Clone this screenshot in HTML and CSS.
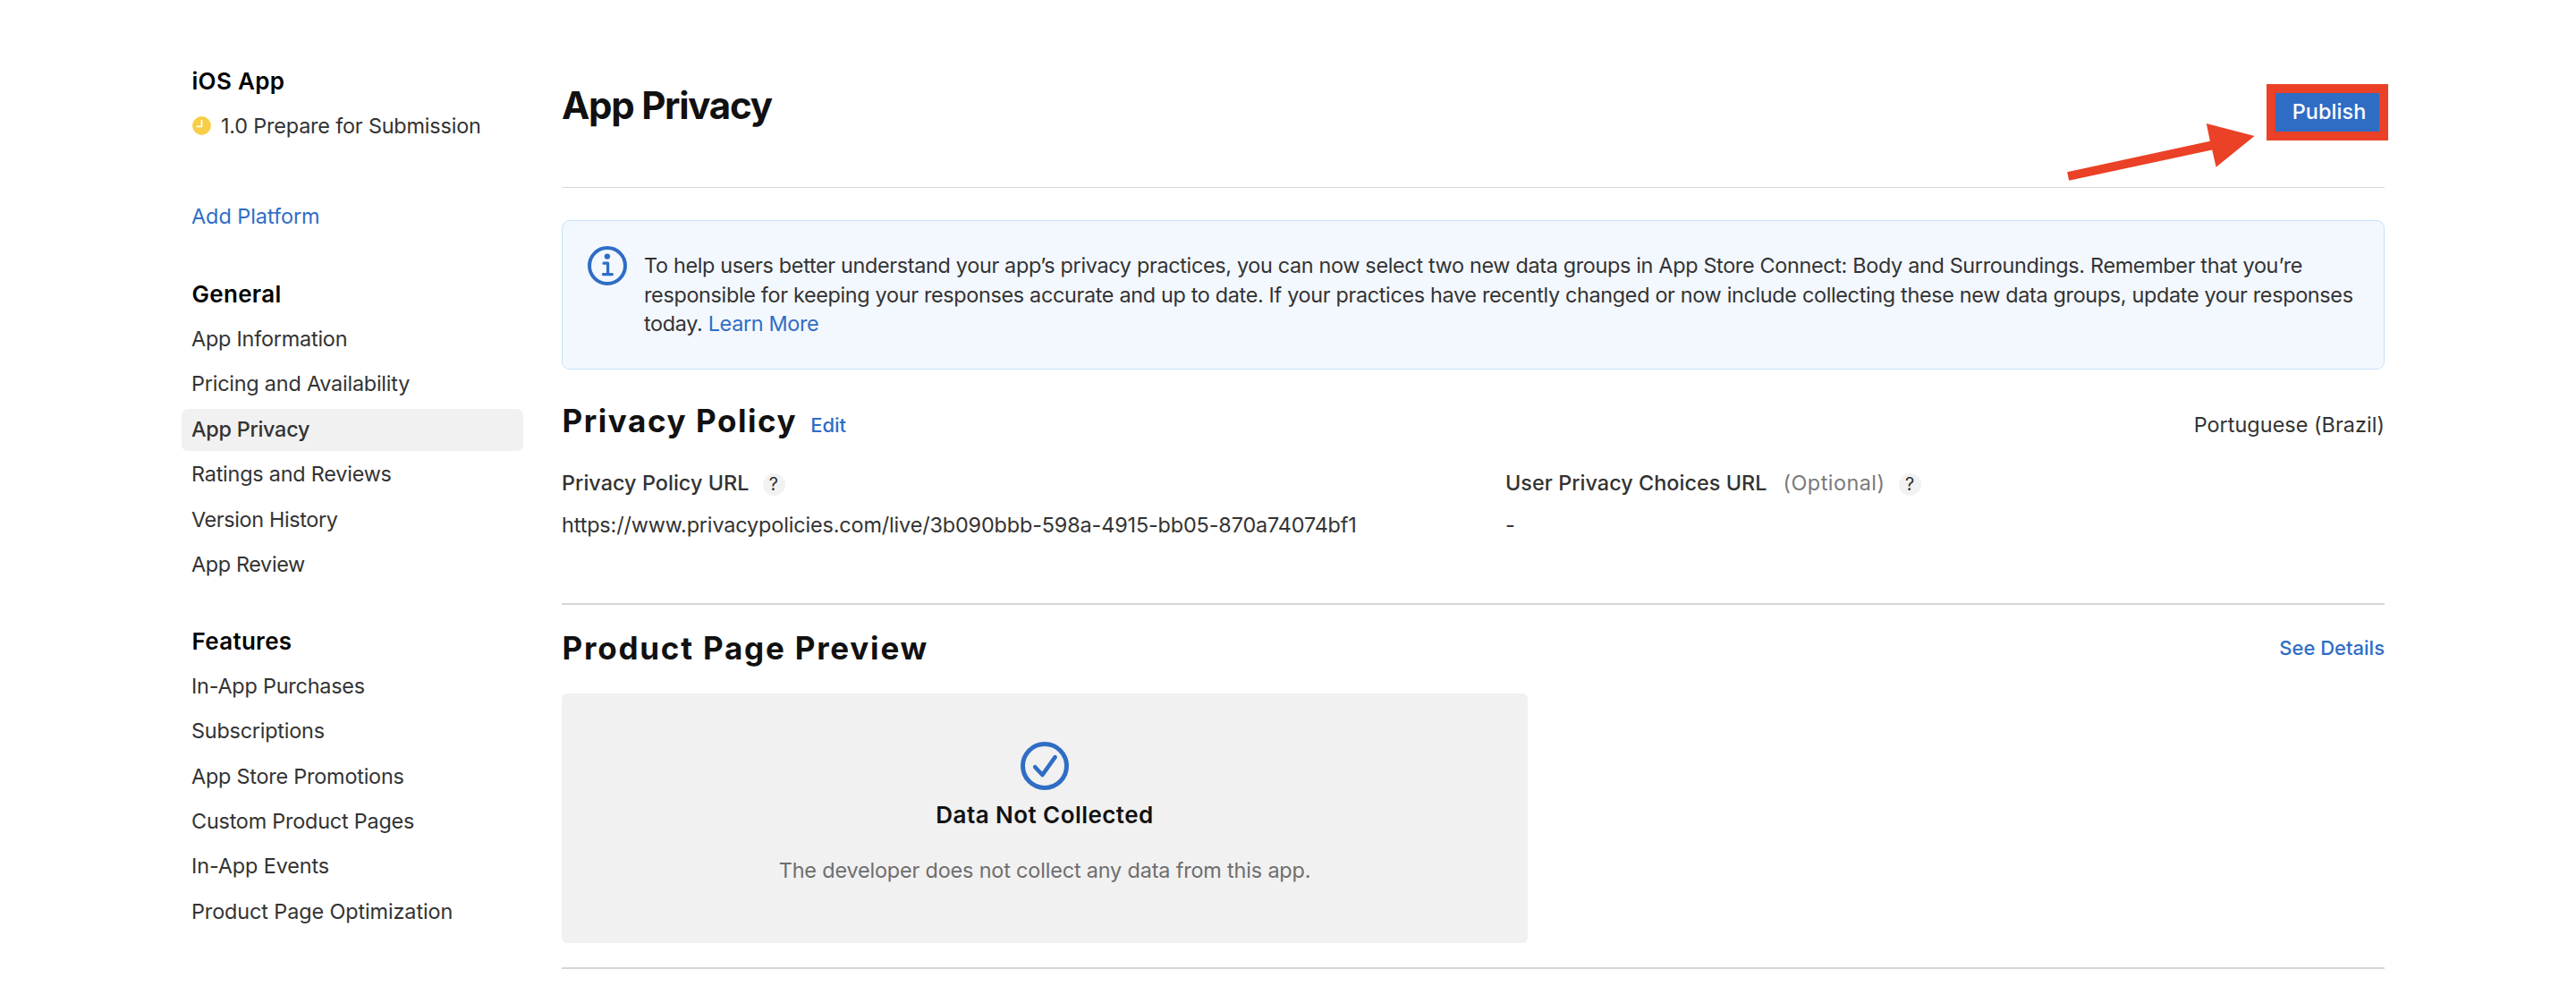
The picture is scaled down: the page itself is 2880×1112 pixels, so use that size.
FILE: index.html
```
<!DOCTYPE html>
<html lang="en">
<head>
<meta charset="utf-8">
<title>App Privacy</title>
<link rel="stylesheet" href="styles.css">
</head>
<body>
<div class="page">
  <aside class="sidebar">
    <section class="group">
      <h3 class="group-title">iOS App</h3>
      <a class="item item-status">
        <svg class="clock" viewBox="0 0 21 21" width="21" height="21"><circle cx="10.5" cy="10.5" r="10.4" fill="#f7ce46"/><path d="M10.5 4v7.3H4.6" fill="none" stroke="#fff" stroke-width="1.7"/></svg>
        <span class="t-status">1.0 Prepare for Submission</span>
      </a>
    </section>
    <a class="item item-add">Add Platform</a>
    <nav class="group">
      <h3 class="group-title">General</h3>
      <a class="item">App Information</a>
      <a class="item">Pricing and Availability</a>
      <a class="item item-active">App Privacy</a>
      <a class="item">Ratings and Reviews</a>
      <a class="item tight">Version History</a>
      <a class="item tight">App Review</a>
    </nav>
    <nav class="group group-features">
      <h3 class="group-title">Features</h3>
      <a class="item">In-App Purchases</a>
      <a class="item">Subscriptions</a>
      <a class="item">App Store Promotions</a>
      <a class="item">Custom Product Pages</a>
      <a class="item loose">In-App Events</a>
      <a class="item loose">Product Page Optimization</a>
    </nav>
  </aside>

  <main class="main">
    <header class="header">
      <h1 class="title">App Privacy</h1>
      <button class="publish">Publish</button>
      <div class="frame"></div>
      <svg class="arrow" viewBox="0 0 214 68" width="214" height="68"><path d="M1.2 54.2 160.8 19.8 156.8 0 210.5 14 167.6 48.7 163.2 29.4 3.2 63.8z" fill="#ea4127"/></svg>
    </header>

    <section class="notice">
      <svg class="notice-icon" viewBox="0 0 44 44" width="44" height="44"><circle cx="22" cy="22" r="20" fill="none" stroke="#2f6dc5" stroke-width="4"/><circle cx="21.9" cy="11.6" r="3.2" fill="#2f6dc5"/><path d="M18 19.2h4.6v12.4M17.4 31.6h10" fill="none" stroke="#2f6dc5" stroke-width="3.2" stroke-linecap="round" stroke-linejoin="round"/></svg>
      <p class="notice-text">To help users better understand your app’s privacy practices, you can now select two new data groups in App Store Connect: Body and Surroundings. Remember that you’re responsible for keeping your responses accurate and up to date. If your practices have recently changed or now include collecting these new data groups, update your responses today. <a class="link">Learn More</a></p>
    </section>

    <section class="policy">
      <div class="policy-head">
        <h2 class="heading">Privacy Policy</h2>
        <a class="link small-link">Edit</a>
        <span class="language">Portuguese (Brazil)</span>
      </div>
      <div class="fields">
        <div class="field">
          <div class="label">Privacy Policy URL<span class="help">?</span></div>
          <div class="value">https://www.privacypolicies.com/live/3b090bbb-598a-4915-bb05-870a74074bf1</div>
        </div>
        <div class="field">
          <div class="label">User Privacy Choices URL<span class="optional">(Optional)</span><span class="help">?</span></div>
          <div class="value">-</div>
        </div>
      </div>
    </section>

    <section class="preview">
      <div class="preview-head">
        <h2 class="heading heading-wide">Product Page Preview</h2>
        <a class="link small-link">See Details</a>
      </div>
      <div class="card">
        <svg viewBox="0 0 54 54" width="54" height="54"><circle cx="27" cy="27" r="24.5" fill="none" stroke="#2f6dc5" stroke-width="5"/><path d="M16.2 28.2 24.4 37 38.6 17.2" fill="none" stroke="#2f6dc5" stroke-width="4.6" stroke-linecap="round" stroke-linejoin="round"/></svg>
        <h4 class="card-title">Data Not Collected</h4>
        <p class="card-text">The developer does not collect any data from this app.</p>
      </div>
    </section>
  </main>
</div>
</body>
</html>
```
FILE: styles.css
```
* { box-sizing: border-box; }
body {
  margin: 0;
  background: #fff;
  color: #333;
  font: 400 23.4px/30px Inter, "Liberation Sans", sans-serif;
}
h1, h2, h3, h4, p { margin: 0; }
.page {
  display: flex;
  gap: 43px;
  width: 2666px;
  height: 1112px;
  padding-left: 203px;
}

/* Sidebar */
.sidebar {
  flex: none;
  display: flex;
  flex-direction: column;
  width: 382px;
  padding-top: 75px;
}
.group { display: flex; flex-direction: column; gap: 3.4px; }
.group-title {
  margin-bottom: 7.6px;
  padding-left: 11.5px;
  color: #000;
  font-size: 26px;
  font-weight: 600;
  line-height: 32px;
  letter-spacing: 0.3px;
}
.item {
  height: 47px;
  padding: 0 11px 2px;
  border-radius: 7px;
  line-height: 45px;
  letter-spacing: -0.21px;
  white-space: nowrap;
}
.item-status { display: flex; align-items: center; gap: 11px; padding-left: 12px; }
.clock { flex: none; }
.t-status { letter-spacing: -0.175px; }
.item-add {
  margin: 54px 0 47px;
  color: #2f6dc5;
  letter-spacing: -0.03px;
}
.item-active { background: #f1f1f1; font-weight: 500; letter-spacing: -0.27px; }
.tight { letter-spacing: -0.36px; }
.loose { letter-spacing: -0.1px; }
.group-features { margin-top: 46px; }

/* Page header */
.main { flex: 1; min-width: 0; }
.header {
  position: relative;
  display: flex;
  justify-content: space-between;
  align-items: flex-start;
  height: 210px;
  padding-top: 93px;
  border-bottom: 1px solid #d6d6d6;
}
.title {
  color: #111;
  font-size: 42px;
  font-weight: 700;
  line-height: 50px;
  letter-spacing: -1.27px;
}
.publish {
  width: 126px;
  height: 53px;
  margin-top: 5px;
  padding: 0 0 0 2px;
  border: 0;
  border-radius: 8px;
  background: #2f6dc5;
  color: #fff;
  font: 500 23.4px/53px Inter, "Liberation Sans", sans-serif;
  letter-spacing: 0.1px;
}
.frame {
  position: absolute;
  top: 94px;
  right: -4px;
  width: 136px;
  height: 63px;
  border: 10px solid #ea4127;
}
.arrow { position: absolute; top: 138px; right: 142px; }

/* Notice */
.notice {
  display: flex;
  gap: 19px;
  height: 167px;
  margin-top: 36px;
  padding: 28px 20px 0 28px;
  border: 1px solid #c7e2f9;
  border-radius: 9px;
  background: #f3f8ff;
}
.notice-icon { flex: none; }
.notice-text {
  padding-top: 6px;
  line-height: 32.5px;
  letter-spacing: -0.328px;
}
.link { color: #2f6dc5; }

/* Privacy policy */
.policy { height: 263px; padding-top: 34px; border-bottom: 2px solid #d6d6d6; }
.policy-head { display: flex; align-items: baseline; gap: 15px; height: 46px; }
.heading {
  padding-left: 0.5px;
  color: #111;
  font-size: 35px;
  font-weight: 700;
  line-height: 46px;
  letter-spacing: 1.56px;
}
.heading-wide { letter-spacing: 1.79px; }
.small-link { font-size: 22px; font-weight: 500; }
.language { margin-left: auto; letter-spacing: 0.05px; }
.fields {
  display: grid;
  grid-template-columns: 1055px 1fr;
  margin-top: 32px;
}
.label {
  display: flex;
  align-items: center;
  margin-bottom: 17px;
  font-weight: 500;
  letter-spacing: 0.04px;
}
.optional {
  margin-left: 18px;
  color: #7a7a7a;
  font-weight: 400;
  letter-spacing: 0.48px;
}
.help {
  width: 25px;
  height: 25px;
  margin: 2px 0 0 15px;
  border-radius: 50%;
  background: #f2f2f2;
  font-size: 20px;
  font-weight: 400;
  line-height: 25px;
  text-align: center;
}
.value { letter-spacing: -0.135px; }

/* Product page preview */
.preview { height: 407px; padding-top: 25px; border-bottom: 2px solid #d6d6d6; }
.preview-head { display: flex; justify-content: space-between; align-items: center; }
.card {
  display: flex;
  flex-direction: column;
  align-items: center;
  width: 1080px;
  height: 279px;
  margin-top: 28px;
  padding-top: 54px;
  border-radius: 6px;
  background: #f1f1f1;
}
.card-title {
  margin-top: 12px;
  color: #111;
  font-size: 26px;
  font-weight: 600;
  line-height: 32px;
  letter-spacing: 0.44px;
}
.card-text { margin-top: 31px; color: #6e6e6e; letter-spacing: -0.155px; }
```
